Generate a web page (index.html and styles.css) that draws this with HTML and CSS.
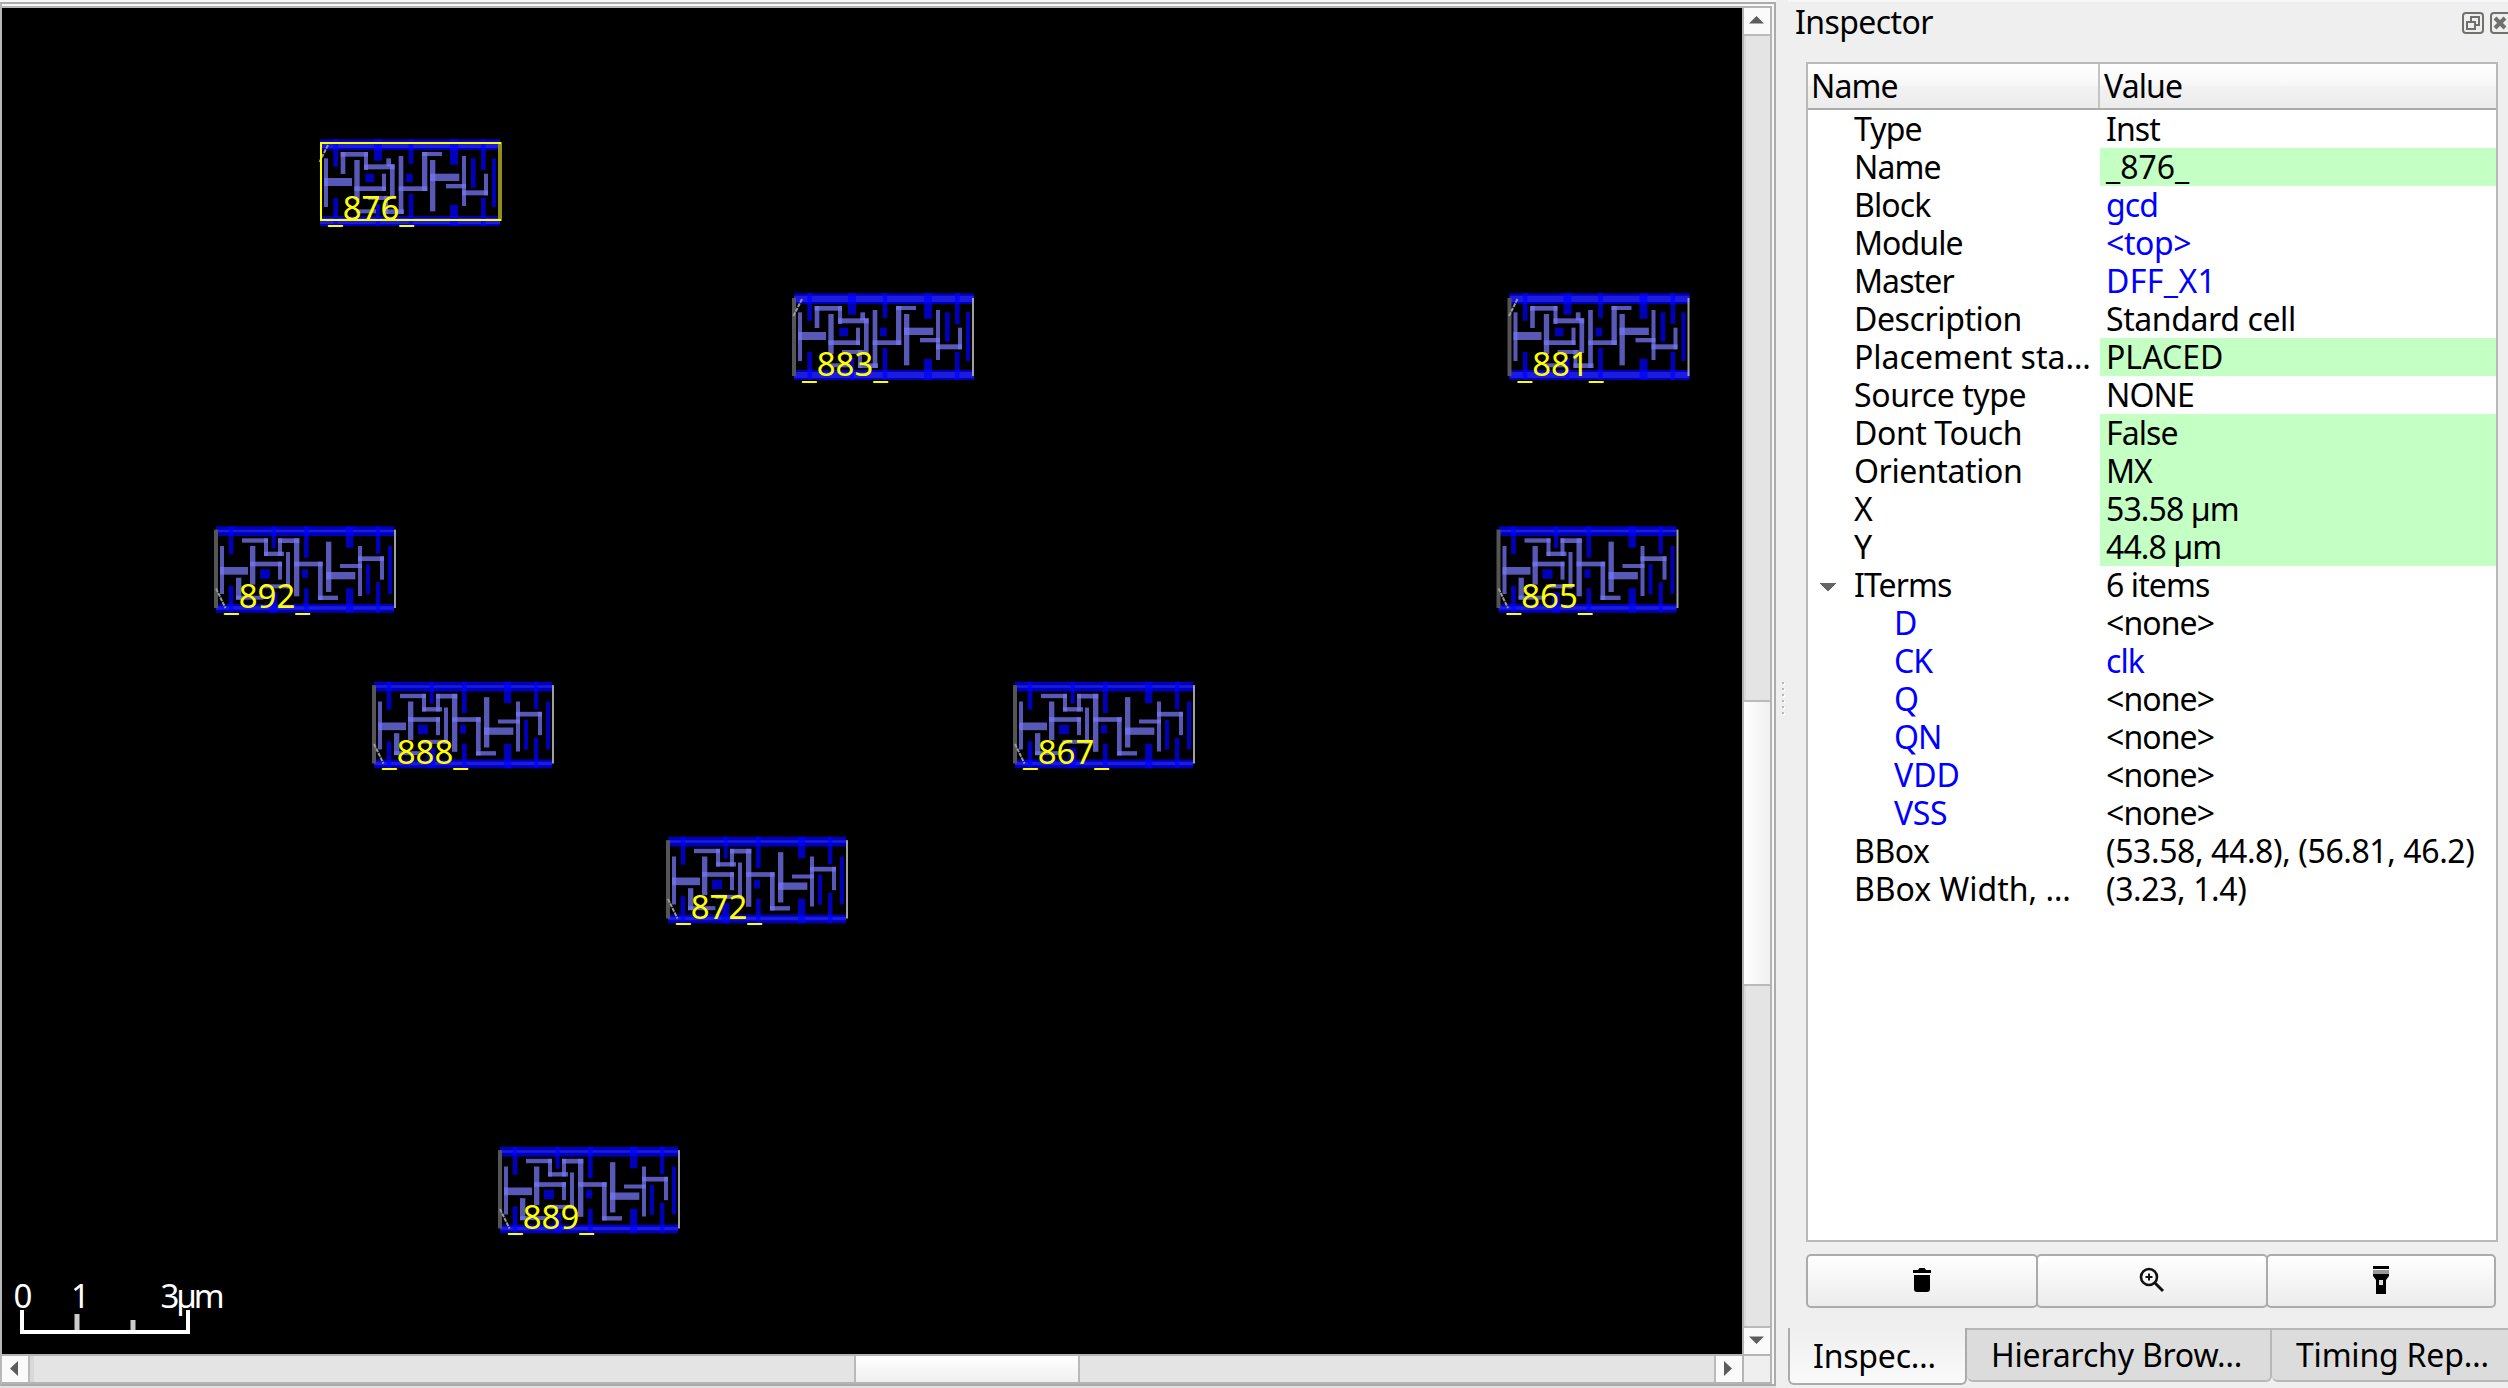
FILE: index.html
```html
<!DOCTYPE html>
<html lang="en">
<head>
<meta charset="utf-8">
<title>Layout viewer</title>
<link rel="stylesheet" href="styles.css">
</head>
<body>
<div class="app">
  <main class="viewer">
    <svg class="canvas" viewBox="2 8 1740 1346" width="1740" height="1346">
      <defs>
        <g id="cell-mx" transform="scale(.33333)">
          <g class="metal">
            <path d="M42 40h540v32H42zM42 270h540v30H42z"/>
            <path d="M82 72h14v50H82zM204 72h24v32h-24zM308 72h14v42h-14zM432 72h24v44h-24zM525 72h14v60h-14zM82 216h14v54H82zM210 234h12v36h-12zM308 204h14v66h-14zM432 236h24v34h-24zM525 216h14v54h-14zM178 143h26v26h-26zM300 143h20v26h-20zM495 97h14v88h-14zM558 97h12v146h-12z"/>
          </g>
          <path class="rail" d="M42 47h540v19H42zM42 276h540v18H42z"/>
          <path class="via" d="M82 40h14v32H82zM204 40h24v32h-24zM308 40h14v32h-14zM432 40h24v32h-24zM525 40h14v32h-14zM82 270h14v30H82zM210 270h12v30h-12zM308 270h14v30h-14zM432 270h24v30h-24zM525 270h14v30h-14z"/>
          <g class="pin">
            <rect x="54" y="97" width="12" height="146"/><rect x="54" y="156" width="84" height="24"/>
            <rect x="104" y="78" width="14" height="66"/><rect x="104" y="78" width="82" height="14"/>
            <rect x="174" y="78" width="12" height="54"/><rect x="174" y="115" width="92" height="15"/>
            <rect x="241" y="97" width="14" height="24"/><rect x="252" y="115" width="14" height="104"/>
            <rect x="145" y="102" width="16" height="120"/><rect x="145" y="181" width="95" height="14"/>
            <rect x="228" y="143" width="12" height="52"/><rect x="186" y="210" width="66" height="12"/>
            <rect x="150" y="250" width="60" height="12"/><rect x="234" y="250" width="60" height="14"/>
            <rect x="234" y="210" width="12" height="54"/><rect x="278" y="90" width="14" height="174"/>
            <rect x="278" y="181" width="86" height="14"/><rect x="348" y="78" width="16" height="117"/>
            <rect x="348" y="78" width="60" height="12"/><rect x="372" y="102" width="16" height="154"/>
            <rect x="372" y="143" width="88" height="22"/><rect x="420" y="174" width="60" height="13"/>
            <rect x="468" y="90" width="12" height="150"/><rect x="468" y="193" width="78" height="15"/>
            <rect x="534" y="143" width="12" height="65"/>
          </g>
        </g>
        <g id="frame-mx" transform="scale(.33333)">
          <path class="edge-dim" d="M36 54h12v234H36z"/><path class="edge" d="M576 54h6v234h-6z"/>
        </g>
        <path id="notch-mx" class="notch" d="M13.5 36L22 19"/>
        <g id="cell-r0">
          <g transform="scale(.33333)">
            <g class="metal">
              <path d="M48 34h534v29H48zM48 267h534v26H48z"/>
              <path d="M86 62h14v56H86zM215 62h12v38h-12zM312 62h14v66h-14zM438 62h22v36h-22zM528 62h13v54h-13zM86 212h14v55H86zM208 232h24v35h-24zM312 220h14v47h-14zM438 220h22v47h-22zM528 202h13v65h-13zM180 163h30v28h-30zM306 163h18v26h-18zM498 148h12v90h-12zM564 93h12v144h-12z"/>
            </g>
            <path class="rail" d="M48 44h534v8H48zM48 274h534v10H48z"/>
            <path class="via" d="M86 34h14v28H86zM215 34h12v28h-12zM312 34h14v28h-14zM438 34h22v28h-22zM528 34h13v28h-13zM86 267h14v26H86zM208 267h24v26h-24zM312 267h14v26h-14zM438 267h22v26h-22zM528 267h13v26h-13z"/>
            <g class="pin">
              <rect x="60" y="93" width="12" height="144"/><rect x="60" y="156" width="84" height="23"/>
              <rect x="126" y="70" width="78" height="13"/><rect x="192" y="70" width="12" height="53"/>
              <rect x="192" y="110" width="60" height="13"/><rect x="234" y="70" width="12" height="53"/>
              <rect x="234" y="70" width="64" height="14"/><rect x="282" y="70" width="16" height="174"/>
              <rect x="150" y="93" width="16" height="116"/><rect x="150" y="140" width="96" height="14"/>
              <rect x="234" y="140" width="12" height="54"/><rect x="258" y="111" width="12" height="109"/>
              <rect x="282" y="140" width="86" height="14"/><rect x="354" y="140" width="14" height="115"/>
              <rect x="354" y="242" width="60" height="13"/><rect x="378" y="80" width="16" height="151"/>
              <rect x="378" y="171" width="88" height="22"/><rect x="420" y="147" width="66" height="12"/>
              <rect x="474" y="93" width="12" height="150"/><rect x="474" y="124" width="78" height="14"/>
              <rect x="540" y="124" width="12" height="70"/><rect x="108" y="188" width="16" height="66"/>
              <rect x="108" y="242" width="82" height="12"/><rect x="190" y="208" width="80" height="12"/>
            </g>
            <path class="edge-dim" d="M42 44h12v235H42z"/><path class="edge" d="M582 44h6v235h-6z"/>
          </g>
          <path class="notch" d="M16 73.500L25.500 93"/>
        </g>
      </defs>

      <g transform="translate(306 126)">
        <use href="#cell-mx"/><use href="#notch-mx"/>
        <path class="selected" d="M15 17H194.500V94H15z"/>
        <path class="selected-soft" d="M192 18h4v75h-4z"/>
        <text class="label" x="22" y="95.500" dy="0 -1.5 0 0 1.5" textLength="86">_876_</text>
      </g>
      <g transform="translate(780 280)">
        <use href="#cell-mx"/><use href="#frame-mx"/><use href="#notch-mx"/>
        <text class="label" x="22" y="97.500" dy="0 -1.5 0 0 1.5" textLength="86">_883_</text>
      </g>
      <g transform="translate(1495.500 280)">
        <use href="#cell-mx"/><use href="#frame-mx"/><use href="#notch-mx"/>
        <text class="label" x="22" y="97.500" dy="0 -1.5 0 0 1.5" textLength="86">_881_</text>
      </g>
      <g transform="translate(200 515)">
        <use href="#cell-r0"/><text class="label" x="24" y="94.500" dy="0 -1.5 0 0 1.5" textLength="86">_892_</text>
      </g>
      <g transform="translate(1482.500 515)">
        <use href="#cell-r0"/><text class="label" x="24" y="94.500" dy="0 -1.5 0 0 1.5" textLength="86">_865_</text>
      </g>
      <g transform="translate(358 670.500)">
        <use href="#cell-r0"/><text class="label" x="24" y="94.500" dy="0 -1.5 0 0 1.5" textLength="86">_888_</text>
      </g>
      <g transform="translate(999 670.500)">
        <use href="#cell-r0"/><text class="label" x="24" y="94.500" dy="0 -1.5 0 0 1.5" textLength="86">_867_</text>
      </g>
      <g transform="translate(652 825.500)">
        <use href="#cell-r0"/><text class="label" x="24" y="94.500" dy="0 -1.5 0 0 1.5" textLength="86">_872_</text>
      </g>
      <g transform="translate(484 1135.500)">
        <use href="#cell-r0"/><text class="label" x="24" y="94.500" dy="0 -1.5 0 0 1.5" textLength="86">_889_</text>
      </g>

      <g class="scale">
        <path class="scale-bar" d="M22 1310v22h166v-22"/>
        <path class="scale-tick" d="M77 1314v16M133 1320v10"/>
        <text x="13.500" y="1308">0</text>
        <text x="71" y="1308">1</text>
        <text x="160.500" y="1308" textLength="64">3µm</text>
      </g>
    </svg>
    <div class="vscroll">
      <span class="step"><svg width="26" height="26"><path d="M5 15.500L12.500 8L20 15.500z"/></svg></span>
      <span class="track track-top"></span>
      <span class="thumb"></span>
      <span class="track"></span>
      <span class="step last"><svg width="26" height="26"><path d="M5 8.500h15L12.500 16z"/></svg></span>
    </div>
    <div class="hscroll">
      <span class="step"><svg width="26" height="26"><path d="M16 5v15L8 12.500z"/></svg></span>
      <span class="track track-left"></span>
      <span class="thumb"></span>
      <span class="track"></span>
      <span class="step last"><svg width="26" height="26"><path d="M8 5v15L16 12.500z"/></svg></span>
    </div>
    <div class="corner"></div>
  </main>
  <div class="splitter"><i></i><i></i><i></i><i></i><i></i><i></i></div>
  <aside class="dock">
    <header class="dock-title">
      <h1>Inspector</h1>
      <svg class="dock-icons" width="46" height="22" viewBox="0 0 46 22" fill="none" stroke="#70706c" stroke-width="2">
        <rect x="1" y="1" width="20" height="20" rx="3"/>
        <path d="M9 9V5h8v8h-4M5 10h8v7H5z"/>
        <rect x="29" y="1" width="20" height="20" rx="3"/>
        <path stroke-width="4" d="M33 6l10 10M43 6L33 16"/>
      </svg>
    </header>
    <section class="tree">
      <div class="head"><span>Name</span><span>Value</span></div>
      <div class="row"><span>Type</span><span>Inst</span></div>
      <div class="row edit"><span>Name</span><span class="wider">_876_</span></div>
      <div class="row"><span>Block</span><span class="link">gcd</span></div>
      <div class="row"><span>Module</span><span class="link wide">&lt;top&gt;</span></div>
      <div class="row"><span>Master</span><span class="link widest">DFF_X1</span></div>
      <div class="row"><span class="wide">Description</span><span class="wide">Standard cell</span></div>
      <div class="row edit"><span class="wider">Placement sta…</span><span class="wider">PLACED</span></div>
      <div class="row"><span class="wide">Source type</span><span>NONE</span></div>
      <div class="row edit"><span class="wide">Dont Touch</span><span>False</span></div>
      <div class="row edit"><span class="wide">Orientation</span><span>MX</span></div>
      <div class="row edit"><span>X</span><span>53.58 µm</span></div>
      <div class="row edit"><span>Y</span><span>44.8 µm</span></div>
      <div class="row open"><span>ITerms</span><span>6 items</span></div>
      <div class="row child"><span>D</span><span>&lt;none&gt;</span></div>
      <div class="row child"><span>CK</span><span class="link">clk</span></div>
      <div class="row child"><span>Q</span><span>&lt;none&gt;</span></div>
      <div class="row child"><span>QN</span><span>&lt;none&gt;</span></div>
      <div class="row child"><span class="wider">VDD</span><span>&lt;none&gt;</span></div>
      <div class="row child"><span class="wide">VSS</span><span>&lt;none&gt;</span></div>
      <div class="row"><span class="wide">BBox</span><span class="wide">(53.58, 44.8), (56.81, 46.2)</span></div>
      <div class="row"><span class="wider">BBox Width, …</span><span class="wide">(3.23, 1.4)</span></div>
    </section>
    <div class="actions">
      <button aria-label="Delete"><svg width="32" height="32" viewBox="0 0 32 32"><path d="M7 6h5l1.500-2h5L20 6h5v3H7z"/><path d="M8 11h16v14q0 3-3 3H11q-3 0-3-3z"/></svg></button>
      <button aria-label="Zoom to"><svg width="32" height="32" viewBox="0 0 32 32" fill="none" stroke="#111"><circle cx="13" cy="13" r="8" stroke-width="2.600"/><path stroke-width="3" d="M19 19l8 8"/><path stroke-width="2" d="M9.500 13h7M13 9.500v7"/></svg></button>
      <button aria-label="Highlight"><svg width="32" height="32" viewBox="0 0 32 32"><path d="M8 2h16v3H8z"/><path fill="#999" d="M8 6h16v4H8z"/><path d="M8 10h16v2l-3 4v14H11V16l-3-4z"/><rect x="14" y="16" width="4" height="5" fill="#ddd"/></svg></button>
    </div>
    <nav class="tabs">
      <span class="tab active">Inspec…</span>
      <span class="tab second">Hierarchy Brow…</span>
      <span class="tab third">Timing Rep…</span>
    </nav>
  </aside>
</div>
</body>
</html>
```
FILE: styles.css
```css
* { box-sizing: border-box; }
body {
  margin: 0;
  overflow: hidden;
  background: #efefef;
  color: #000;
  font-family: "Noto Sans", "Open Sans", sans-serif;
  font-size: 32px;
  letter-spacing: -0.9px;
}
.app { display: flex; width: 2508px; height: 1388px; overflow: hidden; }

/* Layout viewer */
.viewer {
  display: grid;
  grid-template-columns: 1740px 30px;
  grid-template-rows: 1348px 30px;
  align-content: start;
  width: 1776px;
  height: 1384px;
  margin-top: 2px;
  padding: 2px 2px 0 0;
  border: 2px solid #ababab;
  border-left-color: #b8b8b8;
  background: linear-gradient(#b4b4b4, #b4b4b4) 0 2px / 1770px 100% no-repeat, #f7f7f7;
  box-shadow: 0 -2px #f7f7f7, 0 2px #e0e0e0;
}
.canvas { display: block; margin-top: 2px; background: #000; }
.metal { fill: #0000ba; }
.rail { fill: #1c1ce0; }
.via { fill: #0000ff; fill-opacity: .7; }
.pin { fill: #7676f4; fill-opacity: .75; }
.edge-dim { fill: #555; }
.edge { fill: #a0a0a0; }
.notch { stroke: #999; stroke-width: 2; stroke-dasharray: 4 1; }
.selected { fill: none; stroke: #ff0; stroke-width: 2; }
.selected-soft { fill: #909018; }
.label { fill: #ff0; font-size: 33px; letter-spacing: 0; }
.scale { fill: #fff; font-size: 33px; letter-spacing: 0; }
.scale-bar { fill: none; stroke: #fff; stroke-width: 4; }
.scale-tick { fill: none; stroke: #ccc; stroke-width: 5; }

.step { display: block; width: 26px; height: 26px; background: #fafafa; }
.step svg { display: block; fill: #5c5c5c; }
.track { flex: 1; background: #e4e4e4; }
.vscroll { display: flex; flex-direction: column; gap: 2px; width: 26px; height: 1346px; margin: 2px; background: #bababa; }
.vscroll .track-top { flex: 0 0 664px; }
.vscroll .thumb { flex: 0 0 282px; background: linear-gradient(90deg, #fff, #f0f0f0); }
.vscroll .track { border-left: 2px solid #d8d8d8; }
.hscroll { display: flex; gap: 2px; width: 1740px; height: 26px; margin-top: 2px; background: #bababa; }
.hscroll .track-left { flex: 0 0 824px; border-left: 4px solid #d8d8d8; }
.hscroll .thumb { flex: 0 0 222px; background: linear-gradient(#fff, #f0f0f0); }
.corner { width: 26px; height: 26px; margin: 2px; background: #efefef; }

.splitter { display: flex; flex-direction: column; gap: 4px; width: 12px; padding: 682px 0 0 6px; }
.splitter i { display: block; width: 2px; height: 2px; background: #b8b8b8; box-shadow: 1px 1px #fff; }

/* Inspector dock */
.dock { display: flex; flex: none; flex-direction: column; width: 720px; border-top: 2px solid #f7f7f7; }
.dock-title { display: flex; justify-content: space-between; height: 60px; padding-left: 7px; }
.dock-title h1 { margin: 0; font-size: 32px; font-weight: 400; line-height: 40px; letter-spacing: -0.6px; }
.dock-icons { flex: none; margin-top: 10px; }
.tree { width: 692px; height: 1180px; margin-left: 18px; border: 2px solid #b8b8b8; background: #fff; }
.head, .row { display: grid; grid-template-columns: 292px 396px; white-space: nowrap; }
.head { height: 46px; border-bottom: 2px solid #ababab; background: linear-gradient(#fff, #f7f7f7 49%, #f2f2f2 50%, #ececec); line-height: 44px; }
.head span { padding-left: 4px; }
.head span:first-child { padding-left: 3px; border-right: 2px solid #c4c4c4; }
.row { height: 38px; line-height: 37px; }
.row span { height: 38px; padding-left: 6px; }
.row span:first-child { padding-left: 46px; }
.row.child span:first-child { padding-left: 86px; color: #00f; }
.wide { letter-spacing: -0.4px; }
.wider { letter-spacing: 0; }
.widest { letter-spacing: 0.4px; }
.link { color: #00f; }
.edit span:last-child { background: #c4ffc4; }
.open span:first-child {
  background: conic-gradient(from -45deg at 50% 100%, #666 90deg, transparent 0) 12px 17px / 16px 8px no-repeat;
}
.actions { display: grid; grid-template-columns: 232px 230px 228px; margin: 12px 0 0 18px; }
.actions button {
  display: flex; align-items: center; justify-content: center;
  height: 54px; padding: 0 0 2px; border: 2px solid #ababab; border-radius: 5px;
  background: linear-gradient(#fff, #ececec);
}
.actions button + button { margin-left: -2px; }
.tabs { display: flex; align-items: flex-start; margin-top: 20px; white-space: nowrap; letter-spacing: -0.2px; }
.tab { flex: none; height: 54px; line-height: 50px; border: 2px solid #b8b8b8; border-left: 0; border-radius: 0 0 6px 6px; background: #dcdcdc; }
.active { width: 179px; height: 57px; padding-left: 23px; line-height: 56px; border: 2px solid #ababab; border-top: 0; background: linear-gradient(#efefef, #fafafa); }
.second { width: 305px; padding-left: 24px; }
.third { width: 240px; padding-left: 24px; }
```
